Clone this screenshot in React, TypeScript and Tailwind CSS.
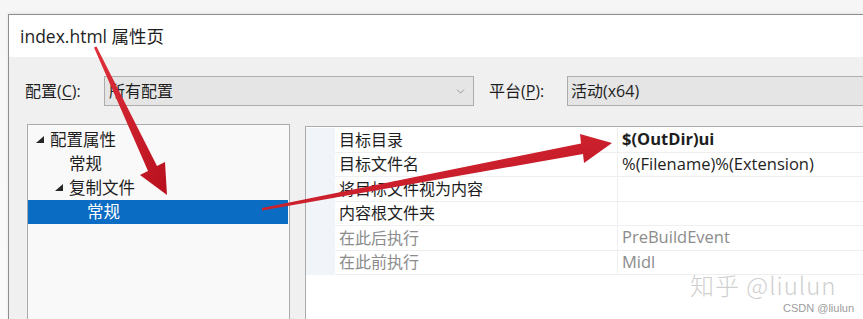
import { ChevronDown } from 'lucide-react'

type TreeItem = {
  label: string
  pad: string
  expander?: boolean
  selected?: boolean
}

const treeItems: TreeItem[] = [
  { label: '配置属性', pad: 'pl-[8px]', expander: true },
  { label: '常规', pad: 'pl-[41px]' },
  { label: '复制文件', pad: 'pl-[27px]', expander: true },
  { label: '常规', pad: 'pl-[59px]', selected: true },
]

type PropRow = {
  name: string
  value: string
  bold?: boolean
  dim?: boolean
}

const propRows: PropRow[] = [
  { name: '目标目录', value: '$(OutDir)ui', bold: true },
  { name: '目标文件名', value: '%(Filename)%(Extension)' },
  { name: '将目标文件视为内容', value: '' },
  { name: '内容根文件夹', value: '' },
  { name: '在此后执行', value: 'PreBuildEvent', dim: true },
  { name: '在此前执行', value: 'Midl', dim: true },
]

function Expander() {
  return (
    <svg width="8" height="7" viewBox="0 0 8 7" className="mb-[2px]">
      <polygon points="8,0 8,7 0,7" fill="#262626" />
    </svg>
  )
}

function Arrows() {
  return (
    <svg
      width="863"
      height="319"
      viewBox="0 0 863 319"
      className="pointer-events-none absolute left-0 top-0"
    >
      <defs>
        <linearGradient id="red" x1="0" y1="0" x2="1" y2="1">
          <stop offset="0" stopColor="#e0303c" />
          <stop offset="1" stopColor="#b8101e" />
        </linearGradient>
      </defs>
      <polygon
        points="94,47.5 96.5,46.5 157,166 165,162 167,195 140,175 148,171"
        fill="url(#red)"
      />
      <polygon
        points="262,208 262,210.5 583,154 584,163 612,143 580,134 581,143.5"
        fill="url(#red)"
      />
    </svg>
  )
}

export default function App() {
  return (
    <div className="relative h-[319px] w-[863px] overflow-hidden bg-gradient-to-b from-[#f6f6f6] to-[#fbfbfb] font-['Open_Sans','Noto_Sans_CJK_SC',sans-serif] text-[#1e1e1e]">
      <div className="flex h-full flex-col pl-[8px] pt-[14px]">
        <div className="flex flex-1 flex-col border-l border-t border-[#8e8e8e] shadow-[0_-1px_3px_rgba(0,0,0,0.08)]">
          <div className="flex h-[42px] shrink-0 items-center bg-white pl-[11px] text-[17.5px]">
            index.html 属性页
          </div>

          <div className="flex flex-1 flex-col bg-[#f0f0f0]">
            <div className="mt-[19px] flex h-[30px] shrink-0 items-center pl-[16px] text-[16px]">
              <div className="w-[79px] shrink-0">
                配置(<span className="underline underline-offset-2">C</span>):
              </div>
              <div className="flex h-full w-[370px] shrink-0 items-center justify-between border border-[#adadad] bg-[#e5e5e5] pl-[4px] pr-[6px]">
                <span>所有配置</span>
                <ChevronDown className="h-[13px] w-[13px] text-[#707070]" strokeWidth={1.25} />
              </div>
              <div className="box-content w-[78px] shrink-0 pl-[15px]">
                平台(<span className="underline underline-offset-2">P</span>):
              </div>
              <div className="flex h-full w-[320px] shrink-0 items-center border border-[#adadad] bg-[#e5e5e5] pl-[3px]">
                活动(x64)
              </div>
            </div>

            <div className="mt-[18px] flex flex-1 gap-[15px] pl-[18px]">
              <div className="w-[263px] shrink-0 border border-b-0 border-[#ababab] bg-[#f9f9f9] pt-[3px] text-[16.5px]">
                {treeItems.map((item, i) => (
                  <div
                    key={i}
                    className={`flex h-[24px] items-center ${item.pad} ${
                      item.selected ? 'mr-[1px] bg-[#0a6cc2] text-white' : ''
                    }`}
                  >
                    {item.expander && (
                      <span className="flex w-[14px] items-center">
                        <Expander />
                      </span>
                    )}
                    <span>{item.label}</span>
                  </div>
                ))}
              </div>

              <div className="mt-[2px] flex-1 border-l border-t border-[#ababab] bg-white pt-[1px] text-[16px]">
                {propRows.map((row, i) => (
                  <div key={i} className="flex h-[24.5px]">
                    <div className="w-[29px] shrink-0 bg-[#f1f4f9]" />
                    <div
                      className={`flex w-[282px] shrink-0 items-center border-b border-[#efefef] pl-[4px] ${
                        row.dim ? 'text-[#8c8c8c]' : ''
                      }`}
                    >
                      {row.name}
                    </div>
                    <div
                      className={`flex flex-1 items-center border-b border-l border-[#efefef] pl-[4px] text-[16.5px] ${
                        row.bold ? 'font-bold' : ''
                      } ${row.dim ? 'text-[#8c8c8c]' : ''}`}
                    >
                      {row.value}
                    </div>
                  </div>
                ))}
              </div>
            </div>
          </div>
        </div>
      </div>

      <div className="absolute left-[690px] top-[272px] h-[26px] font-['Noto_Sans_CJK_SC',sans-serif] text-[24px] font-light leading-[26px] tracking-[1px] text-[#cfcfcf] [text-shadow:1px_1px_0_#ffffff]">
        知乎 @liulun
      </div>
      <div className="absolute left-[783px] top-[302px] font-['Liberation_Sans',sans-serif] text-[11px] leading-[12px] text-[#9c9c9c]">
        CSDN @liulun
      </div>

      <Arrows />
    </div>
  )
}
